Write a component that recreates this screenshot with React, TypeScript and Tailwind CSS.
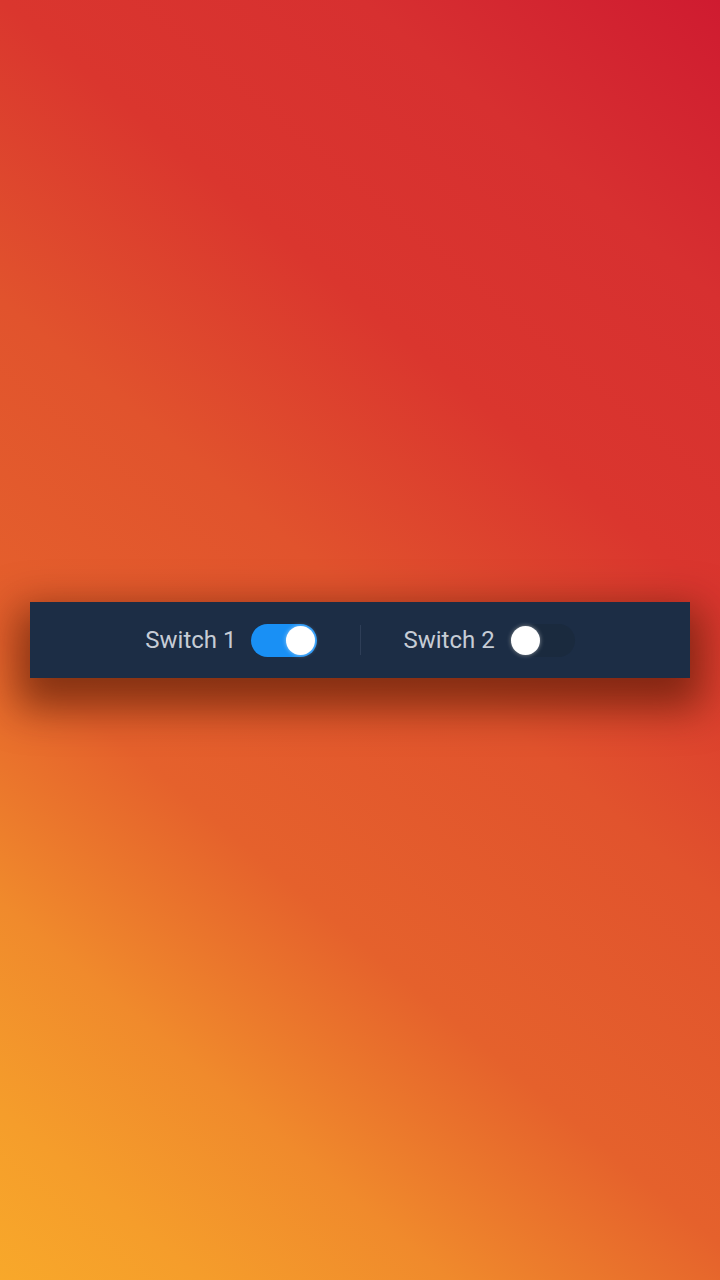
import { useState } from 'react'

const Toggle = ({ on, onClick }: { on: boolean; onClick: () => void }) => {
    return (
        <button
            onClick={onClick}
            className={`relative w-[66px] h-[33px] rounded-full flex items-center px-[2px] ${on ? 'bg-[#1990f5] justify-end' : 'bg-[#1a2a3e] justify-start'}`}
        >
            <span className="block w-[29px] h-[29px] rounded-full bg-white shadow-[0_0_4px_rgba(255,255,255,0.5)]" />
        </button>
    )
}

const App = () => {
    const [one, setOne] = useState(true)
    const [two, setTwo] = useState(false)

    return (
        <div className="w-[720px] h-[1280px] bg-[linear-gradient(40deg,#f8a82a_0%,#f59d2b_9%,#f08a2c_20%,#e5612c_34%,#e1532d_52%,#da362e_68%,#d73030_84%,#cf1b30_100%)] flex items-center justify-center font-['Roboto',sans-serif]">
            <section className="w-[660px] h-[76px] bg-[#1c2d45] shadow-[0_18px_40px_12px_rgba(70,20,0,0.6)] flex items-center justify-center">
                <div className="flex items-center gap-[14px]">
                    <span className="text-[24px] text-[#c6ccd5]">Switch 1</span>
                    <Toggle on={one} onClick={() => setOne(!one)} />
                </div>
                <div className="w-px h-[30px] bg-[#2e3e57] mx-[43px]" />
                <div className="flex items-center gap-[14px]">
                    <span className="text-[24px] text-[#c6ccd5]">Switch 2</span>
                    <Toggle on={two} onClick={() => setTwo(!two)} />
                </div>
            </section>
        </div>
    )
}

export default App
